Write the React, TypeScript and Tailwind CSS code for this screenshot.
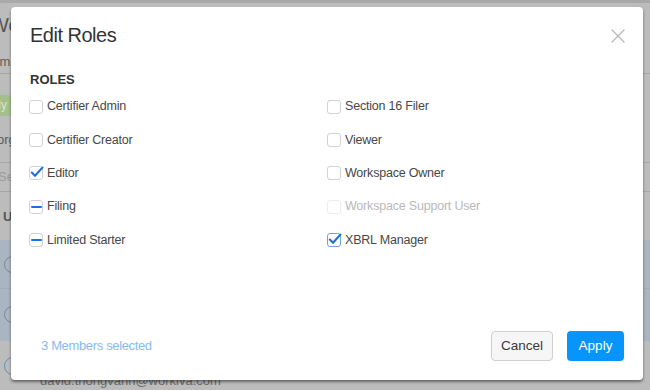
import { X } from 'lucide-react';

type Role = {
  label: string;
  state: 'off' | 'on' | 'mixed' | 'disabled';
  focus?: boolean;
};

const left: Role[] = [
  { label: 'Certifier Admin', state: 'off' },
  { label: 'Certifier Creator', state: 'off' },
  { label: 'Editor', state: 'on' },
  { label: 'Filing', state: 'mixed' },
  { label: 'Limited Starter', state: 'mixed' },
];

const right: Role[] = [
  { label: 'Section 16 Filer', state: 'off' },
  { label: 'Viewer', state: 'off' },
  { label: 'Workspace Owner', state: 'off' },
  { label: 'Workspace Support User', state: 'disabled' },
  { label: 'XBRL Manager', state: 'on', focus: true },
];

function Checkbox({ state, focus }: { state: Role['state']; focus?: boolean }) {
  return (
    <span
      className={
        'relative flex h-[14px] w-[14px] shrink-0 items-center justify-center rounded-[3px] border bg-white ' +
        (state === 'disabled'
          ? 'border-[#ececec]'
          : focus
            ? 'border-[#6aa3e6]'
            : 'border-[#d2d2d2]')
      }
    >
      {state === 'on' ? (
        <svg viewBox="0 0 14 14" className="absolute -top-[2px] left-0 h-[14px] w-[14px]">
          <path
            d="M1.8 7.6 L5 10.8 L12.4 2.6"
            fill="none"
            stroke="#1d6fd8"
            strokeWidth="2.1"
            strokeLinecap="round"
            strokeLinejoin="round"
          />
        </svg>
      ) : null}
      {state === 'mixed' ? <span className="h-[2px] w-[11px] rounded-[1px] bg-[#1a72e0]" /> : null}
    </span>
  );
}

function RoleRow({ role }: { role: Role }) {
  return (
    <div className="flex h-[33.33px] items-center gap-[4px]">
      <Checkbox state={role.state} focus={role.focus} />
      <span
        className={
          'text-[12.5px] tracking-[-0.2px] ' +
          (role.state === 'disabled' ? 'text-[#b9b9b9]' : 'text-[#474747]')
        }
      >
        {role.label}
      </span>
    </div>
  );
}

function Backdrop() {
  return (
    <div className="flex h-full flex-col text-[#5b5b5b]">
      <div className="h-[3px] bg-[#a9a9a9]" />
      <div className="flex h-[45px] items-center">
        <span className="-ml-[10px] text-[20px] text-[#555]">Workspace</span>
      </div>
      <div className="flex h-[27px] items-center border-b border-[#a7a7a7] pt-[4px]">
        <span className="-ml-[17px] text-[13px]">Name</span>
      </div>
      <div className="flex h-[90px] flex-col">
        <div className="mt-[21px] flex h-[21px] w-[60px] -ml-[49px] items-center justify-end rounded-[3px] bg-[#a3c08c] pr-[4px] text-[12px] text-[#d8e6cf]">
          Apply
        </div>
        <span className="mt-[14px] -ml-[3px] text-[13px]">org</span>
      </div>
      <div className="flex h-[30px] items-center border-y border-[#a7a7a7]">
        <span className="-ml-[2px] text-[13px] text-[#9b9b9b]">Search</span>
      </div>
      <div className="flex h-[49px] items-center pt-[2px]">
        <span className="ml-[3px] text-[13px] font-bold text-[#555]">User</span>
      </div>
      <div className="flex h-[50px] items-center border-b border-[#9fadb9] bg-[#a9b5c1]">
        <span className="ml-[4px] h-[17px] w-[17px] rounded-full border border-[#7d858c]" />
      </div>
      <div className="flex h-[52px] items-center bg-[#a9b5c1]">
        <span className="ml-[4px] h-[17px] w-[17px] rounded-full border border-[#7d858c]" />
      </div>
      <div className="relative flex flex-1 items-start">
        <span className="ml-[4px] mt-[16px] h-[18px] w-[18px] rounded-full border border-[#5c8fc4]" />
        <span className="ml-[18px] mt-[30px] text-[13px] text-[#6c6c6c]">david.thongvanh@workiva.com</span>
      </div>
    </div>
  );
}

export default function App() {
  return (
    <div className="relative h-[390px] w-[650px] overflow-hidden bg-[#bcbcbc] font-['Liberation_Sans',Arial,sans-serif]">
      <Backdrop />

      <div className="absolute left-[11px] top-[7px] flex h-[373px] w-[632px] flex-col rounded-[4px] bg-white px-[18px] pt-[15px] shadow-[0_2px_3px_rgba(0,0,0,0.45)]">
        <div className="flex h-[26px] items-center justify-between">
          <h2 className="pl-[1px] text-[20px] leading-[26px] tracking-[-0.5px] text-[#333]">Edit Roles</h2>
          <button type="button" className="-mr-[5px] mt-[2px] text-[#b8b8b8]" aria-label="Close">
            <X size={24} strokeWidth={1.25} />
          </button>
        </div>

        <div className="mt-[24px] pl-[1px] text-[13px] font-bold leading-[16px] text-[#333]">ROLES</div>

        <div className="mt-[2px] grid grid-cols-[298px_1fr]">
          <div className="flex flex-col">
            {left.map((r) => (
              <RoleRow key={r.label} role={r} />
            ))}
          </div>
          <div className="flex flex-col">
            {right.map((r) => (
              <RoleRow key={r.label} role={r} />
            ))}
          </div>
        </div>

        <div className="mt-auto mb-[19px] flex items-center justify-between pr-[1px]">
          <span className="pl-[12px] text-[13px] tracking-[-0.35px] text-[#8bb9ec]">3 Members selected</span>
          <div className="flex gap-[14px]">
            <button
              type="button"
              className="h-[30px] w-[62px] rounded-[4px] border border-[#cfcfcf] bg-[#f6f6f6] text-[13.5px] text-[#3a3a3a]"
            >
              Cancel
            </button>
            <button
              type="button"
              className="h-[30px] w-[57px] rounded-[4px] bg-[#0795fb] text-[13.5px] text-white"
            >
              Apply
            </button>
          </div>
        </div>
      </div>
    </div>
  );
}
